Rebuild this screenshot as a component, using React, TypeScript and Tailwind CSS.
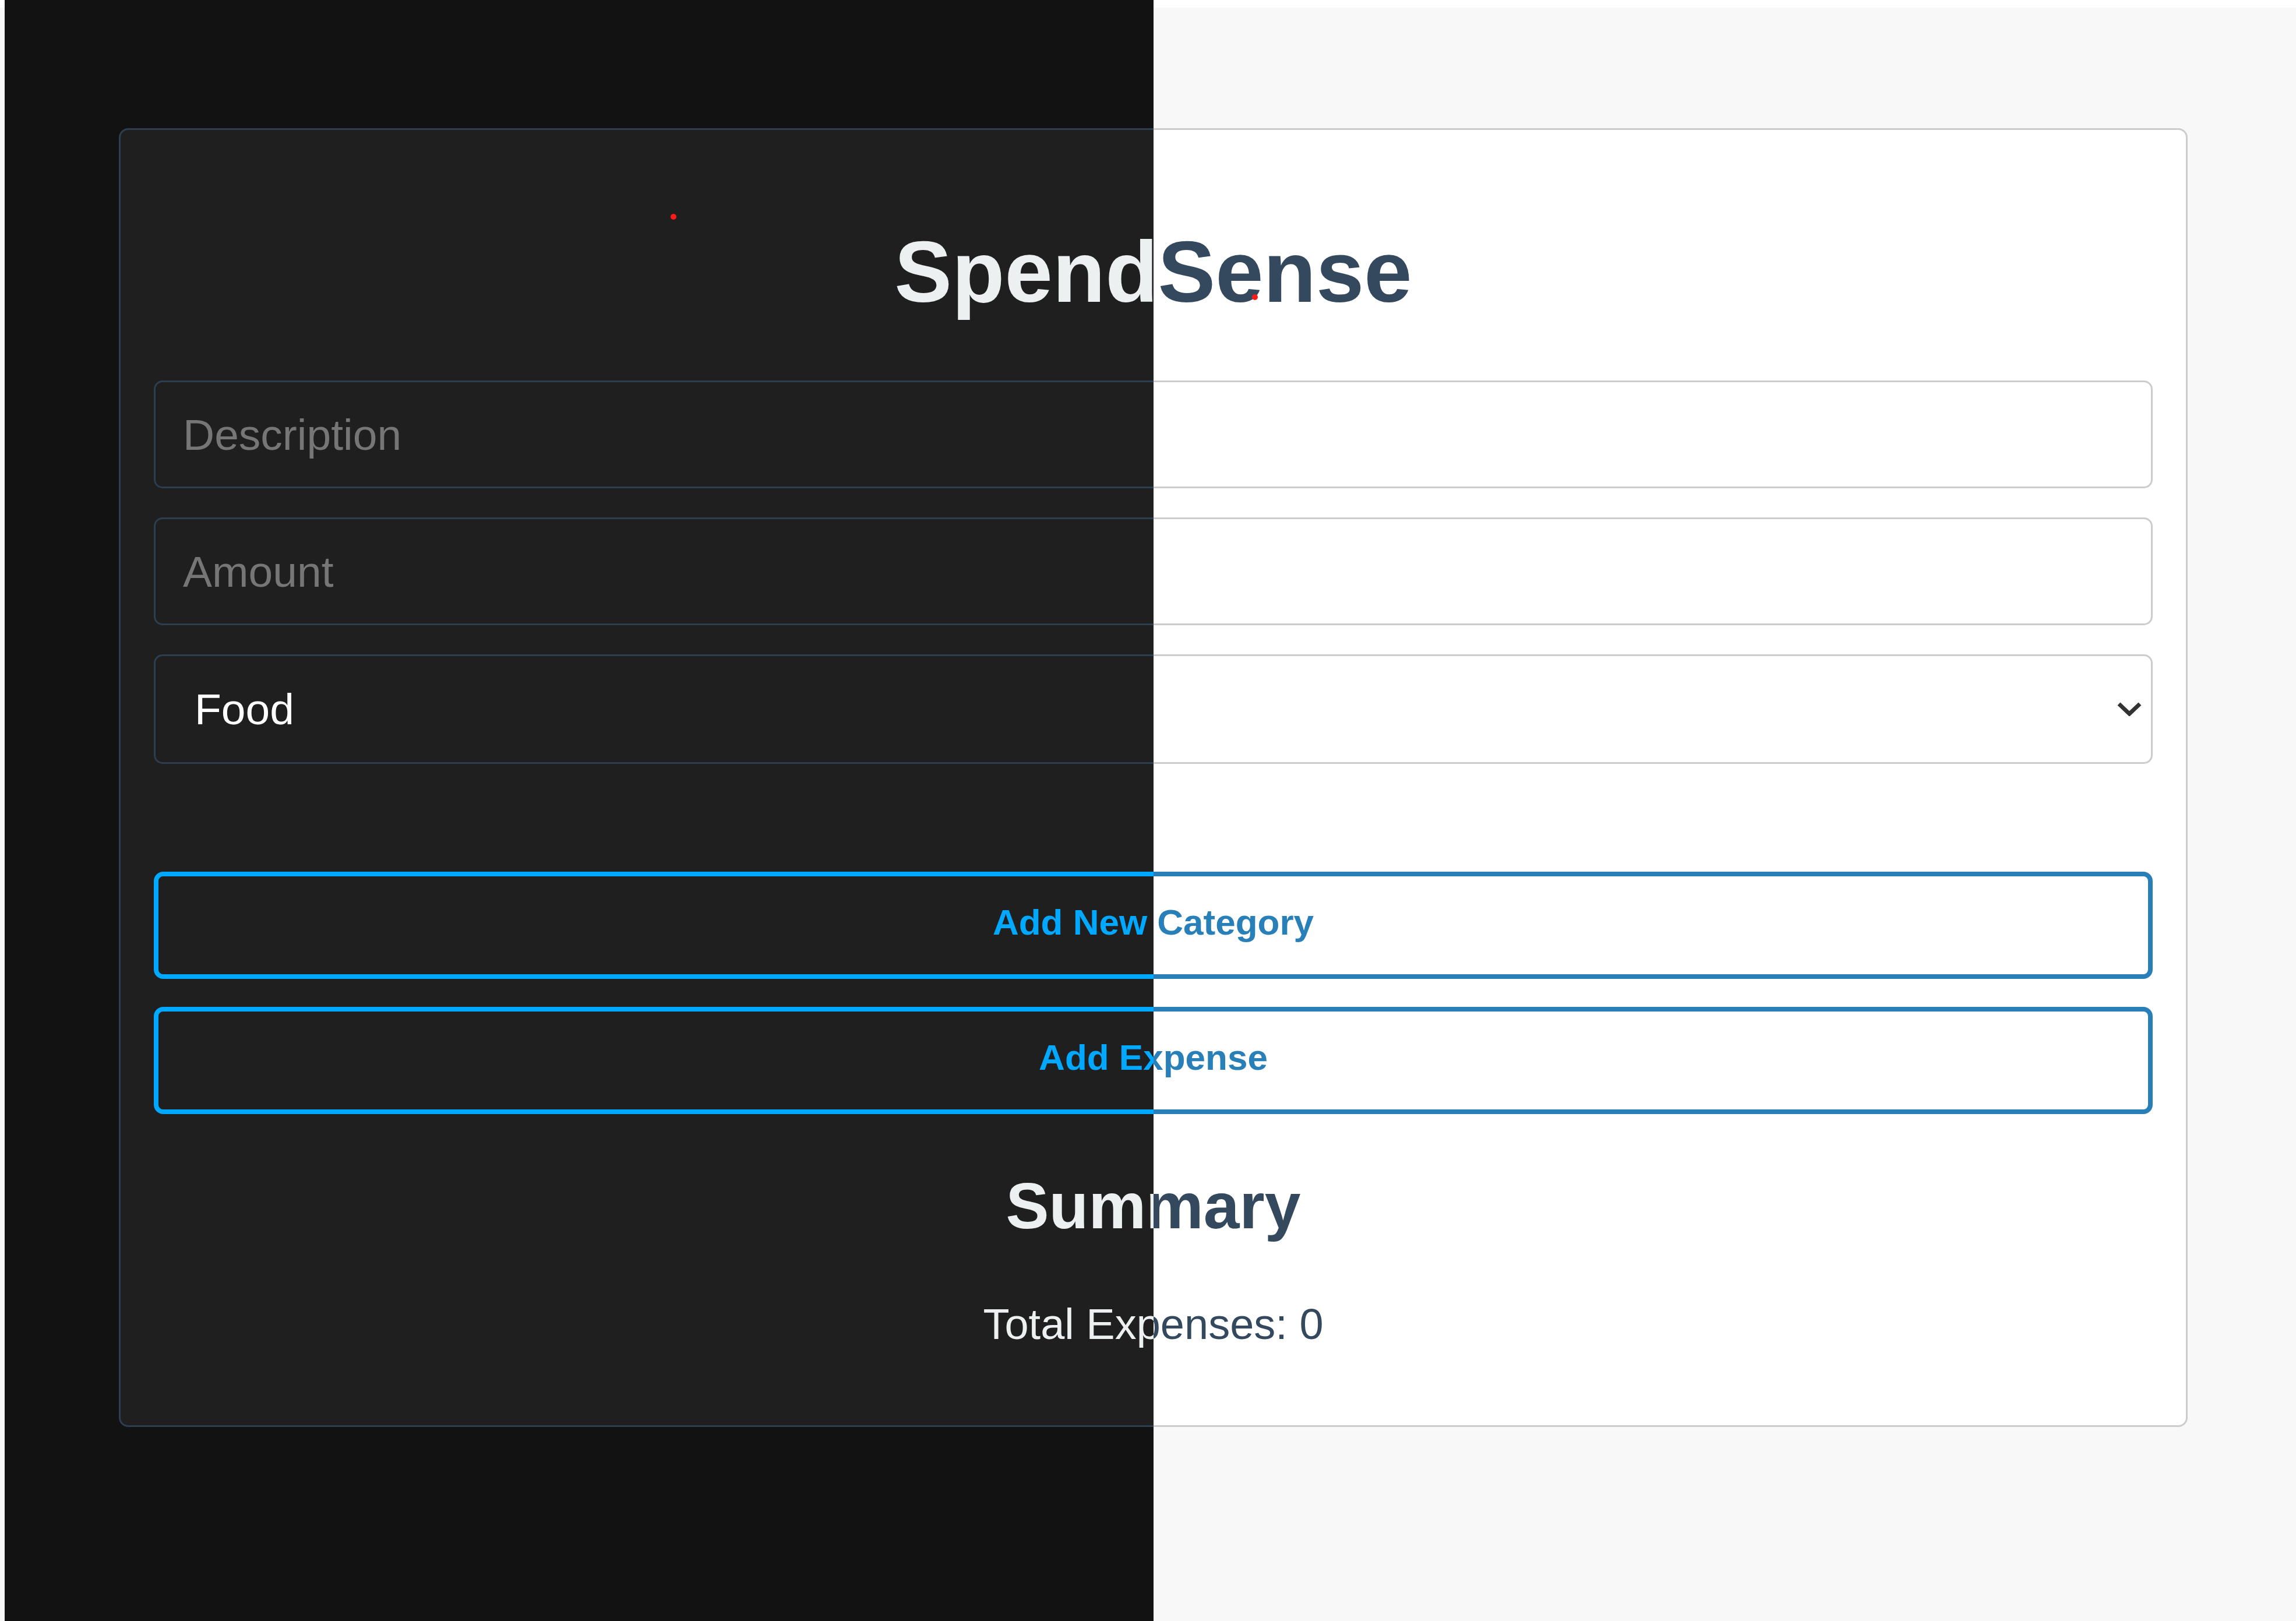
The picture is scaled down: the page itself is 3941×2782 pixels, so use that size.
import type { ReactNode } from "react";

type Mode = "dark" | "light";

const themes = {
  dark: {
    page: "bg-[#121212] pt-[220px]",
    card: "border-[#2c3e50] bg-[#1f1f1f]",
    heading: "text-[#ecf0f1]",
    field:
      "border-[#2c3e50] bg-[#1f1f1f] text-white placeholder:text-[#767676]",
    chevron: "text-[#ecf0f1]",
    button: "border-[#00a8ff] text-[#00a8ff]",
    body: "text-[#ecf0f1]",
  },
  light: {
    page: "border-t-[13px] border-t-white bg-[#f8f8f8] pt-[207px]",
    card: "border-[#cccccc] bg-white",
    heading: "text-[#34495e]",
    field: "border-[#cccccc] bg-white text-[#333333] placeholder:text-[#767676]",
    chevron: "text-[#333333]",
    button: "border-[#2980b9] text-[#2980b9]",
    body: "text-[#34495e]",
  },
};

function ActionButton({ mode, children }: { mode: Mode; children: ReactNode }) {
  return (
    <button
      type="button"
      className={`block h-[184px] w-full rounded-[16px] border-[8px] pb-[12px] text-center text-[62px] font-bold ${themes[mode].button}`}
    >
      {children}
    </button>
  );
}

function SpendSense({ mode }: { mode: Mode }) {
  const t = themes[mode];

  return (
    <div className={`h-[2782px] w-[3941px] ${t.page}`}>
      <div
        className={`ml-[204px] flex h-[2229px] w-[3551px] flex-col rounded-[16px] border-[3px] px-[57px] ${t.card}`}
      >
        <h1
          className={`mt-[170px] text-center text-[148px] font-bold leading-none ${t.heading}`}
        >
          SpendSense
        </h1>

        <input
          type="text"
          placeholder="Description"
          className={`mt-[112px] block h-[185px] w-full rounded-[15px] border-[3px] pl-[47px] text-[75px] outline-none ${t.field}`}
        />
        <input
          type="number"
          placeholder="Amount"
          className={`mt-[50px] block h-[185px] w-full rounded-[15px] border-[3px] pl-[47px] text-[75px] outline-none ${t.field}`}
        />

        <div className="relative mt-[50px]">
          <select
            defaultValue="Food"
            className={`block h-[188px] w-full appearance-none rounded-[15px] border-[3px] pl-[67px] text-[75px] outline-none ${t.field}`}
          >
            <option>Food</option>
            <option>Transport</option>
            <option>Bills</option>
          </select>
          <svg
            viewBox="0 0 42 24"
            className={`pointer-events-none absolute right-[19px] top-1/2 h-[24px] w-[42px] -translate-y-1/2 ${t.chevron}`}
            fill="none"
            stroke="currentColor"
            strokeWidth="7"
          >
            <polyline points="3,3 21,20 39,3" />
          </svg>
        </div>

        <div className="mt-[185px] flex flex-col gap-[48px]">
          <ActionButton mode={mode}>Add New Category</ActionButton>
          <ActionButton mode={mode}>Add Expense</ActionButton>
        </div>

        <h2
          className={`mt-[103px] text-center text-[111px] font-bold leading-none ${t.heading}`}
        >
          Summary
        </h2>
        <p className={`mt-[110px] text-center text-[74px] leading-none ${t.body}`}>
          Total Expenses: 0
        </p>
      </div>
    </div>
  );
}

export default function App() {
  return (
    <div className="relative h-[2782px] w-[3941px] overflow-hidden font-['Liberation_Sans',Arial,sans-serif]">
      <SpendSense mode="light" />
      {/* dark theme laid over the left half, like a before/after slider */}
      <div className="absolute inset-0 [clip-path:inset(0_1961px_0_8px)]">
        <SpendSense mode="dark" />
      </div>
      {/* stray cursor dots in the capture */}
      <span className="absolute left-[1151px] top-[367px] h-[10px] w-[10px] rounded-full bg-[#ff1a1a]" />
      <span className="absolute left-[2149px] top-[505px] h-[10px] w-[10px] rounded-full bg-[#ff1a1a]" />
    </div>
  );
}
